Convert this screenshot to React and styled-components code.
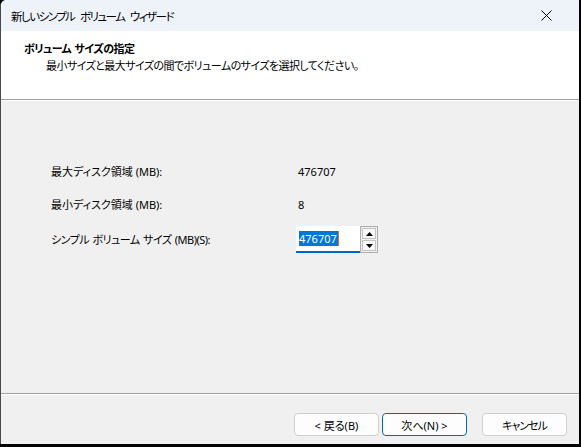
import React from "react";
import styled, { createGlobalStyle } from "styled-components";

const Global = createGlobalStyle`
  html, body { margin: 0; padding: 0; background: #000; }
  body { font-family: "Noto Sans", "Noto Sans CJK JP", sans-serif; }
  * { box-sizing: border-box; }
`;

const FONT = `"Noto Sans", "Noto Sans CJK JP", sans-serif`;

const Window = styled.div`
  width: 579px;
  height: 444px;
  background: #f0f0f0;
  display: flex;
  flex-direction: column;
  border-left: 1px solid #4a4a4a;
  border-top-left-radius: 6px;
  overflow: hidden;
  font-family: ${FONT};
  font-feature-settings: "palt" 1;
  color: #000;
`;

const TitleBar = styled.div`
  height: 31px;
  flex: none;
  background: #eef3f9;
  display: flex;
  align-items: center;
  padding-left: 10px;
  font-size: 11.5px;
`;

const TitleText = styled.div`
  flex: 1;
  white-space: nowrap;
  letter-spacing: -1.5px;
  word-spacing: 4px;
`;

const CloseBtn = styled.div`
  width: 46px;
  height: 31px;
  display: flex;
  align-items: center;
  justify-content: center;
  margin-right: 10px;
`;

const Header = styled.div`
  height: 68px;
  flex: none;
  background: #fff;
  padding: 10px 0 0 23px;
  display: flex;
  flex-direction: column;
`;

const HeaderTitle = styled.div`
  font-size: 11px;
  font-weight: 700;
  line-height: 16px;
  letter-spacing: -0.6px;
  word-spacing: 1px;
`;

const HeaderSub = styled.div`
  font-size: 11px;
  line-height: 16px;
  padding-left: 22px;
  margin-top: 1px;
  letter-spacing: -0.55px;
`;

const Etched = styled.div`
  flex: none;
  height: 2px;
  border-top: 1px solid #a0a0a0;
  border-bottom: 1px solid #ffffff;
`;

const Body = styled.div`
  flex: 1;
  padding: 58px 0 0 50px;
`;

const Grid = styled.div`
  display: grid;
  grid-template-columns: 247px auto;
  grid-auto-rows: auto;
  row-gap: 9px;
  align-items: center;
  font-size: 11px;
`;

const Cell = styled.div`
  height: ${(p) => p.$h || 24}px;
  display: flex;
  align-items: center;
  white-space: pre;
  letter-spacing: ${(p) => p.$ls || 0}px;
  word-spacing: ${(p) => (p.$ls ? 1 : 0)}px;
`;

const Spin = styled.div`
  display: flex;
  align-items: stretch;
  height: 27px;
  margin-left: -2px;
  margin-top: 1px;
`;

const TextBox = styled.div`
  width: 64px;
  background: #fff;
  border-bottom: 2px solid #0067c0;
  display: flex;
  align-items: center;
  padding-left: 3px;
`;

const Selected = styled.span`
  background: #0078d7;
  color: #fff;
  line-height: 15px;
  padding: 0 1px 0 0;
  border-right: 1px solid #e07020;
`;

const SpinBox = styled.div`
  width: 18px;
  border: 1px solid #adadad;
  padding: 1px;
  display: flex;
  flex-direction: column;
  gap: 1px;
  background: #f0f0f0;
`;

const SpinBtn = styled.div`
  flex: 1;
  border: 1px solid #c4c4c4;
  background: #f7f7f7;
  display: flex;
  align-items: center;
  justify-content: center;
`;

const Footer = styled.div`
  height: 49px;
  flex: none;
  display: flex;
  align-items: flex-start;
  justify-content: flex-end;
  padding: 18px 12px 0 0;
`;

const Button = styled.div`
  width: 85px;
  height: 23px;
  border-radius: 4px;
  background: #fdfdfd;
  border: 1px solid ${(p) => (p.$default ? "#0067c0" : "#d0d0d0")};
  display: flex;
  align-items: center;
  justify-content: center;
  font-size: 11px;
  margin-left: ${(p) => p.$gap || 0}px;
  white-space: pre;
  letter-spacing: ${(p) => p.$ls || 0}px;
`;

const Tri = ({ down }) => (
  <svg width="7" height="4" viewBox="0 0 7 4">
    {down ? <path d="M0 0H7L3.5 4Z" fill="#000" /> : <path d="M0 4H7L3.5 0Z" fill="#000" />}
  </svg>
);

export default function App() {
  return (
    <>
      <Global />
      <Window>
        <TitleBar>
          <TitleText>新しいシンプル ボリューム ウィザード</TitleText>
          <CloseBtn>
            <svg width="11" height="11" viewBox="0 0 11 11">
              <path d="M0.5 0.5L10.5 10.5M10.5 0.5L0.5 10.5" stroke="#000" strokeWidth="1" />
            </svg>
          </CloseBtn>
        </TitleBar>
        <Header>
          <HeaderTitle>ボリューム サイズの指定</HeaderTitle>
          <HeaderSub>最小サイズと最大サイズの間でボリュームのサイズを選択してください。</HeaderSub>
        </Header>
        <Etched />
        <Body>
          <Grid>
            <Cell>最大ディスク領域 (MB):</Cell>
            <Cell>476707</Cell>
            <Cell>最小ディスク領域 (MB):</Cell>
            <Cell>8</Cell>
            <Cell $h={27} $ls={-0.5}>シンプル ボリューム サイズ (MB)(S):</Cell>
            <Spin>
              <TextBox>
                <Selected>476707</Selected>
              </TextBox>
              <SpinBox>
                <SpinBtn>
                  <Tri />
                </SpinBtn>
                <SpinBtn>
                  <Tri down />
                </SpinBtn>
              </SpinBox>
            </Spin>
          </Grid>
        </Body>
        <Etched />
        <Footer>
          <Button>&lt; 戻る(B)</Button>
          <Button $default $gap={3}>次へ(N) &gt;</Button>
          <Button $gap={15} $ls={-1}>キャンセル</Button>
        </Footer>
      </Window>
    </>
  );
}
